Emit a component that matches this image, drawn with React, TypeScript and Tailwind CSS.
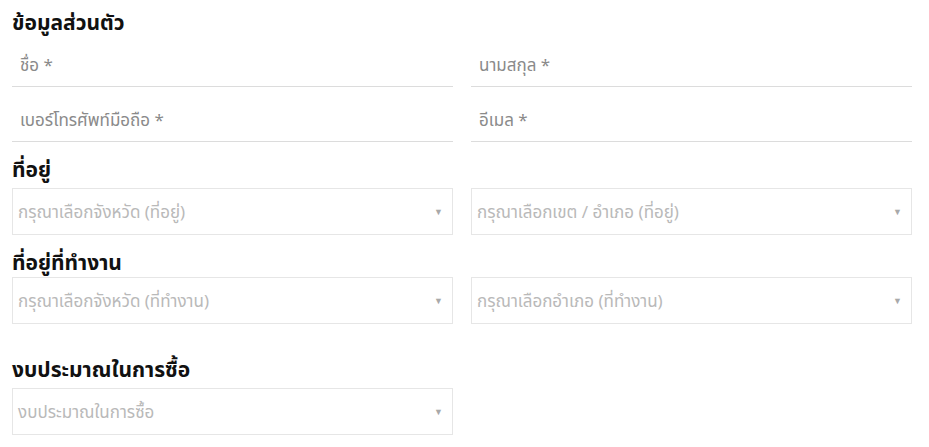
import React from 'react'

function UnderlineInput({ label }: { label: string }) {
  return (
    <div className="h-[55px] flex items-end border-b border-[#dcdcdc]">
      <span className="pl-2 pb-[11px] text-[17px] leading-[20px] text-[#8a8a8a]">{label}</span>
    </div>
  )
}

function SelectBox({ placeholder }: { placeholder: string }) {
  return (
    <div className="h-[47px] flex items-center justify-between border border-[#e6e6e6] bg-white pl-[5px] pr-[9px]">
      <span className="text-[17px] leading-[20px] text-[#b9b9b9]">{placeholder}</span>
      <span className="text-[9px] text-[#a9a9a9]">▼</span>
    </div>
  )
}

function Heading({ children }: { children: React.ReactNode }) {
  return <h2 className="text-[21px] leading-[26px] font-bold text-[#111]">{children}</h2>
}

export default function App() {
  return (
    <div
      className="w-[929px] h-[447px] bg-white pl-3 pr-[17px] pt-[9px]"
      style={{ fontFamily: '"Noto Sans", "Noto Sans Thai", Tahoma, sans-serif' }}
    >
      <Heading>ข้อมูลส่วนตัว</Heading>
      <div className="grid grid-cols-2 gap-x-[18px]">
        <div className="-mt-[3px]"><UnderlineInput label="ชื่อ *" /></div>
        <div className="-mt-[3px]"><UnderlineInput label="นามสกุล *" /></div>
        <UnderlineInput label="เบอร์โทรศัพท์มือถือ *" />
        <UnderlineInput label="อีเมล *" />
      </div>

      <div className="mt-[14px]">
        <Heading>ที่อยู่</Heading>
      </div>
      <div className="grid grid-cols-2 gap-x-[18px] mt-[6px]">
        <SelectBox placeholder="กรุณาเลือกจังหวัด (ที่อยู่)" />
        <SelectBox placeholder="กรุณาเลือกเขต / อำเภอ (ที่อยู่)" />
      </div>

      <div className="mt-[14px]">
        <Heading>ที่อยู่ที่ทำงาน</Heading>
      </div>
      <div className="grid grid-cols-2 gap-x-[18px] mt-[2px]">
        <SelectBox placeholder="กรุณาเลือกจังหวัด (ที่ทำงาน)" />
        <SelectBox placeholder="กรุณาเลือกอำเภอ (ที่ทำงาน)" />
      </div>

      <div className="mt-[32px]">
        <Heading>งบประมาณในการซื้อ</Heading>
      </div>
      <div className="grid grid-cols-2 gap-x-[18px] mt-[6px]">
        <SelectBox placeholder="งบประมาณในการซื้อ" />
      </div>
    </div>
  )
}
